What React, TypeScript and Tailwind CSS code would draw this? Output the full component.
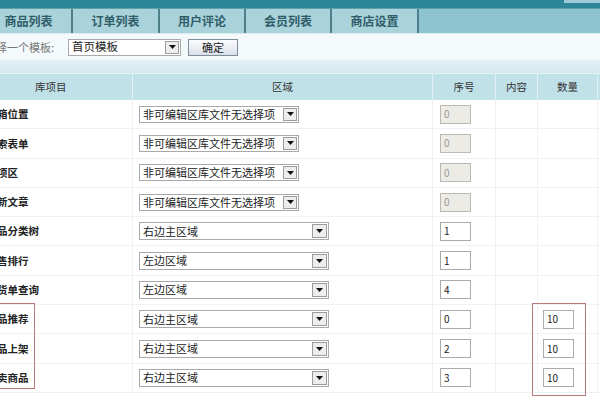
import React from 'react';

type Row = {
  label: string;
  area: string;
  locked: boolean;
  order: string;
  qty?: string;
};

const rows: Row[] = [
  { label: '箱位置', area: '非可编辑区库文件无选择项', locked: true, order: '0' },
  { label: '索表单', area: '非可编辑区库文件无选择项', locked: true, order: '0' },
  { label: '项区', area: '非可编辑区库文件无选择项', locked: true, order: '0' },
  { label: '新文章', area: '非可编辑区库文件无选择项', locked: true, order: '0' },
  { label: '品分类树', area: '右边主区域', locked: false, order: '1' },
  { label: '售排行', area: '左边区域', locked: false, order: '1' },
  { label: '货单查询', area: '左边区域', locked: false, order: '4' },
  { label: '品推荐', area: '右边主区域', locked: false, order: '0', qty: '10' },
  { label: '品上架', area: '右边主区域', locked: false, order: '2', qty: '10' },
  { label: '卖商品', area: '右边主区域', locked: false, order: '3', qty: '10' },
];

const tabs = [
  { name: '商品列表', cls: 'w-[87px] ml-[-14px]' },
  { name: '订单列表', cls: 'w-[87px]' },
  { name: '用户评论', cls: 'w-[86px]' },
  { name: '会员列表', cls: 'w-[86px]' },
  { name: '商店设置', cls: 'w-[87px]' },
];

const Arrow: React.FC<{ big?: boolean }> = ({ big }) => (
  <span
    className={`flex items-center justify-center border border-[#9c9c9c] bg-[#ededed] ${
      big ? 'w-[15px] h-[14px]' : 'w-[14px] h-[13px]'
    }`}
  >
    <svg width="7" height="4" viewBox="0 0 7 4">
      <path d="M0 0 L7 0 L3.5 4 Z" fill="#111" />
    </svg>
  </span>
);

const FakeSelect: React.FC<{ text: string; wide?: boolean }> = ({ text, wide }) => (
  <div
    className={`flex items-center border border-[#a9a9a9] bg-white ${
      wide ? 'w-[190px] h-[18px]' : 'w-[160px] h-[17px]'
    }`}
  >
    <span className="flex-1 pl-[3px] text-[11px] leading-none text-[#222] whitespace-nowrap">
      {text}
    </span>
    <span className="mr-[1px]">
      <Arrow big={wide} />
    </span>
  </div>
);

const Box: React.FC<{ value: string; locked?: boolean }> = ({ value, locked }) => (
  <div
    className={`w-[31px] h-[19px] flex items-center pl-[3px] text-[10px] leading-none border ${
      locked
        ? 'bg-[#ecebe5] border-[#b9b9b3] text-[#9a9a9a]'
        : 'bg-white border-[#aaaaaa] text-[#222]'
    }`}
  >
    {value}
  </div>
);

const App: React.FC = () => {
  return (
    <div className="w-[600px] h-[400px] overflow-hidden bg-white font-['Noto_Sans_CJK_SC',sans-serif]">
      {/* top band */}
      <div className="h-[8px] bg-[#2c8698] flex justify-end">
        <div className="w-[36px] h-[3px] bg-[#9ccbd5]" />
      </div>
      <div className="h-[1px] bg-[#5e9fac]" />

      {/* tabs */}
      <div className="h-[24px] flex bg-[#8ec4cf]">
        {tabs.map((t) => (
          <div
            key={t.name}
            className={`${t.cls} shrink-0 flex items-center justify-center bg-[#a9d2db] border-r-2 border-[#4e7e89] text-[12px] font-bold text-[#2f5d68]`}
          >
            {t.name}
          </div>
        ))}
      </div>

      {/* template chooser */}
      <div className="h-[27px] flex items-center bg-[#f4f9fb] border-t border-[#d9ebef]">
        <span className="w-[68px] text-[11px] text-[#777] ml-[-4px] whitespace-nowrap">择一个模板:</span>
        <div className="ml-[4px] flex items-center h-[17px] w-[113px] border border-[#a9a9a9] bg-white">
          <span className="flex-1 pl-[3px] text-[11.5px] leading-none text-[#222]">首页模板</span>
          <span className="mr-[1px]">
            <Arrow />
          </span>
        </div>
        <button className="ml-[7px] w-[50px] h-[17px] border border-[#7f8c99] bg-gradient-to-b from-[#fbfcfd] to-[#d9e0ea] text-[11px] leading-none text-[#222]">
          确定
        </button>
      </div>

      {/* gap */}
      <div className="h-[13px] bg-gradient-to-b from-[#e4f1f4] to-[#d3e8ed]" />

      {/* header */}
      <div className="h-[27px] flex bg-[#c1e1e9] text-[10.5px] text-[#333] border-t border-[#e3f1f4]">
        <div className="w-[133px] shrink-0 flex items-center pl-[35px] border-r border-[#e2f0f3]">库项目</div>
        <div className="w-[300px] shrink-0 flex items-center justify-center border-r border-[#e2f0f3]">区域</div>
        <div className="w-[63px] shrink-0 flex items-center justify-center border-r border-[#e2f0f3]">序号</div>
        <div className="w-[42px] shrink-0 flex items-center justify-center border-r border-[#e2f0f3]">内容</div>
        <div className="w-[60px] shrink-0 flex items-center justify-center border-r border-[#e2f0f3]">数量</div>
      </div>

      {/* body */}
      <div className="relative">
        {rows.map((r, i) => (
          <div key={i} className="h-[29.3px] flex border-b border-[#eef2f3]">
            <div className="w-[133px] shrink-0 flex items-center overflow-hidden border-r border-[#eef2f3]">
              <span className="ml-[-3px] text-[10.5px] font-bold text-[#222] whitespace-nowrap">{r.label}</span>
            </div>
            <div className="w-[300px] shrink-0 flex items-center pl-[6px] border-r border-[#eef2f3]">
              <FakeSelect text={r.area} wide={!r.locked} />
            </div>
            <div className="w-[63px] shrink-0 flex items-center pl-[7px] border-r border-[#eef2f3]">
              <Box value={r.order} locked={r.locked} />
            </div>
            <div className="w-[42px] shrink-0 border-r border-[#eef2f3]" />
            <div className="w-[60px] shrink-0 flex items-center pl-[5px] border-r border-[#eef2f3]">
              {r.qty && <Box value={r.qty} />}
            </div>
          </div>
        ))}

        {/* annotation boxes */}
        <div className="absolute left-[-5px] top-[203px] w-[40px] h-[86px] border-[1.5px] border-[#b47a7a]" />
        <div className="absolute left-[532px] top-[203px] w-[54px] h-[93px] border-[1.5px] border-[#b47a7a]" />
      </div>
    </div>
  );
};

export default App;
